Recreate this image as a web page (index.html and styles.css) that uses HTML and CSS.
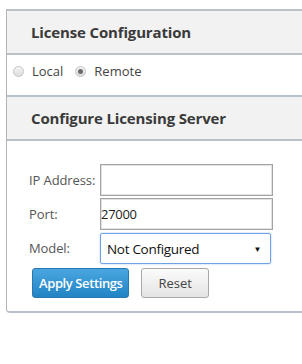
FILE: index.html
```html
<!DOCTYPE html>
<html>
  <head>
    <title>License Configuration</title>
    <meta name="viewport" content="width=device-width, initial-scale=1.0" />
    <link rel="stylesheet" href="styles.css">
  </head>
  <body>
    <div class="panel">
      <div class="section-head">License Configuration</div>
      <div class="mode-row">
        <label class="radio"><span class="dot"></span>Local</label>
        <label class="radio"><span class="dot checked"></span>Remote</label>
      </div>
      <div class="section-head">Configure Licensing Server</div>
      <div class="server-form">
        <label class="field-label">IP Address:</label>
        <div class="text-box"></div>
        <label class="field-label">Port:</label>
        <div class="text-box">27000</div>
        <label class="field-label">Model:</label>
        <div class="select-box">
          <span>Not Configured</span>
          <span class="arrow">&#9660;</span>
        </div>
        <div class="actions">
          <button class="btn primary">Apply Settings</button>
          <button class="btn">Reset</button>
        </div>
      </div>
    </div>
  </body>
</html>
```

FILE: styles.css
```css
body {
  margin: 0;
  background: #fff;
  overflow: hidden;
  font-family: "Open Sans", "Noto Sans", sans-serif;
  color: #333;
}

.panel {
  width: 320px;
  margin: 9px 0 0 6px;
  border-left: 1px solid #b4b4b4;
  border-bottom: 2px solid #b9c0c7;
  border-bottom-left-radius: 4px;
  padding-bottom: 13px;
}

.section-head {
  height: 42px;
  display: flex;
  align-items: center;
  padding-left: 24px;
  background: #f2f2f2;
  border-top: 2px solid #b9c1ca;
  border-bottom: 2px solid #b9c1ca;
  font-size: 15px;
  font-weight: 700;
  letter-spacing: -0.15px;
  color: #3a3a3a;
}

.mode-row {
  height: 40px;
  display: flex;
  align-items: flex-start;
  padding: 7px 0 0 6px;
  box-sizing: border-box;
  font-size: 13px;
  color: #444;
}

.radio {
  display: flex;
  align-items: center;
  margin-right: 12px;
}

.dot {
  width: 9px;
  height: 9px;
  border: 1px solid #c4c4c4;
  border-radius: 50%;
  background: linear-gradient(#f4f4f4, #dcdcdc);
  margin-right: 8px;
  position: relative;
}

.dot.checked::after {
  content: "";
  position: absolute;
  top: 2px;
  left: 2px;
  width: 5px;
  height: 5px;
  border-radius: 50%;
  background: #6a6a6a;
}

.server-form {
  display: grid;
  grid-template-columns: 71px 173px;
  row-gap: 2px;
  align-items: center;
  padding: 23px 0 0 22px;
  font-size: 13px;
}

.field-label {
  color: #555;
  letter-spacing: -0.1px;
}

.text-box {
  height: 30px;
  border: 1px solid #a4a4a4;
  box-shadow: inset 0 0 0 1px #e2e2e2;
  display: flex;
  align-items: center;
  font-size: 13px;
  color: #222;
  letter-spacing: -0.3px;
}

.select-box {
  width: 171px;
  height: 31px;
  margin-top: 1px;
  border: 1px solid #6fa3e6;
  box-shadow: 0 0 2px #9cc2f2;
  border-radius: 2px;
  display: flex;
  align-items: center;
  justify-content: space-between;
  padding: 0 9px 0 6px;
  box-sizing: border-box;
  font-size: 13.5px;
  color: #111;
  letter-spacing: -0.3px;
}

.arrow {
  font-size: 8px;
}

.actions {
  grid-column: 1 / 3;
  display: flex;
  gap: 12px;
  margin: 2px 0 0 3px;
}

.btn {
  height: 30px;
  padding: 0 16px;
  border: 1px solid #a8a8a8;
  border-radius: 3px;
  background: linear-gradient(#fbfbfb, #e4e4e4);
  font-family: inherit;
  font-size: 13px;
  color: #444;
}

.btn.primary {
  padding: 0 6px;
  border-color: #2a78b0;
  background: linear-gradient(#4aa6e0, #2184c4);
  color: #fff;
  font-weight: 600;
  letter-spacing: -0.4px;
}
```
